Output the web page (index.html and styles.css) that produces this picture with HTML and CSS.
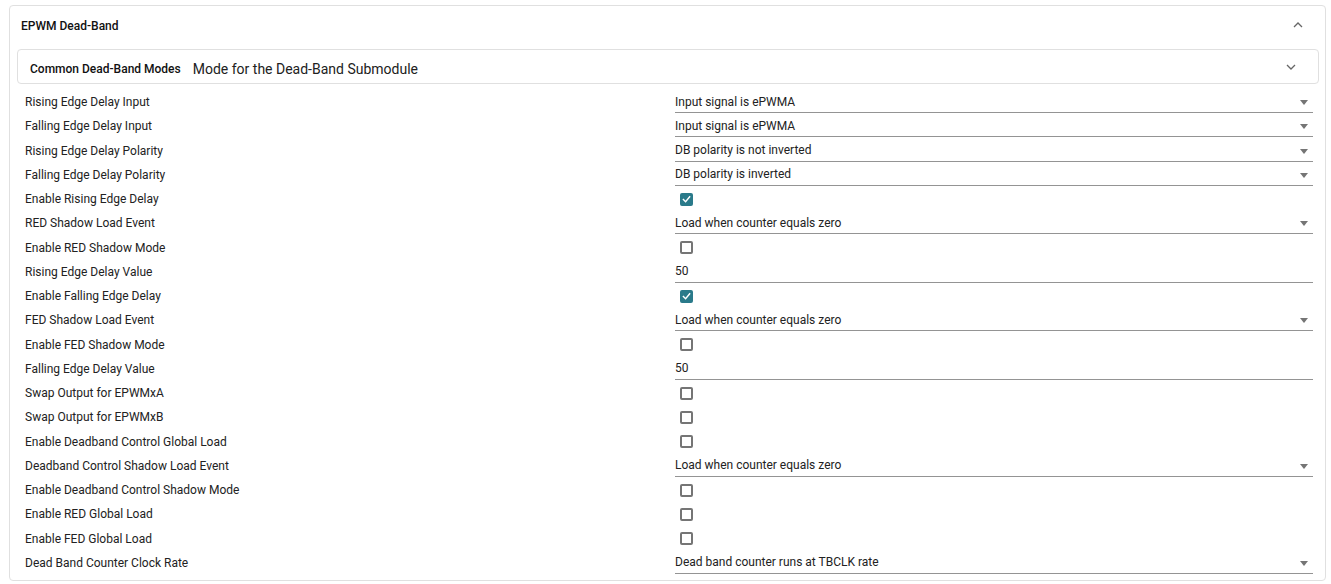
FILE: index.html
```html
<!DOCTYPE html>
<html lang="en">
<head>
    <meta charset="UTF-8">
    <meta name="viewport" content="width=device-width, initial-scale=1.0">
    <title>EPWM Dead-Band</title>
    <link rel="stylesheet" href="styles.css">
</head>
<body>

    <div class="panel">
        <div class="panel-head">
            <span class="panel-title">EPWM Dead-Band</span>
            <svg class="chev" width="10" height="6" viewBox="0 0 10 6"><path d="M1 5 L5 1 L9 5" fill="none" stroke="#666" stroke-width="1.3"/></svg>
        </div>

        <div class="mode-card">
            <span class="mode-name">Common Dead-Band Modes</span>
            <span class="mode-desc">Mode for the Dead-Band Submodule</span>
            <svg class="chev" width="10" height="6" viewBox="0 0 10 6"><path d="M1 1 L5 5 L9 1" fill="none" stroke="#666" stroke-width="1.3"/></svg>
        </div>

        <div class="rows">
            <div class="label">Rising Edge Delay Input</div>
            <div class="select">Input signal is ePWMA</div>

            <div class="label">Falling Edge Delay Input</div>
            <div class="select">Input signal is ePWMA</div>

            <div class="label">Rising Edge Delay Polarity</div>
            <div class="select">DB polarity is not inverted</div>

            <div class="label">Falling Edge Delay Polarity</div>
            <div class="select">DB polarity is inverted</div>

            <div class="label">Enable Rising Edge Delay</div>
            <div class="check"><span class="box on"><svg width="10" height="8" viewBox="0 0 10 8"><path d="M1 4 L4 7 L9 1" fill="none" stroke="#fff" stroke-width="1.6"/></svg></span></div>

            <div class="label">RED Shadow Load Event</div>
            <div class="select">Load when counter equals zero</div>

            <div class="label">Enable RED Shadow Mode</div>
            <div class="check"><span class="box"></span></div>

            <div class="label">Rising Edge Delay Value</div>
            <div class="text">50</div>

            <div class="label">Enable Falling Edge Delay</div>
            <div class="check"><span class="box on"><svg width="10" height="8" viewBox="0 0 10 8"><path d="M1 4 L4 7 L9 1" fill="none" stroke="#fff" stroke-width="1.6"/></svg></span></div>

            <div class="label">FED Shadow Load Event</div>
            <div class="select">Load when counter equals zero</div>

            <div class="label">Enable FED Shadow Mode</div>
            <div class="check"><span class="box"></span></div>

            <div class="label">Falling Edge Delay Value</div>
            <div class="text">50</div>

            <div class="label">Swap Output for EPWMxA</div>
            <div class="check"><span class="box"></span></div>

            <div class="label">Swap Output for EPWMxB</div>
            <div class="check"><span class="box"></span></div>

            <div class="label">Enable Deadband Control Global Load</div>
            <div class="check"><span class="box"></span></div>

            <div class="label">Deadband Control Shadow Load Event</div>
            <div class="select">Load when counter equals zero</div>

            <div class="label">Enable Deadband Control Shadow Mode</div>
            <div class="check"><span class="box"></span></div>

            <div class="label">Enable RED Global Load</div>
            <div class="check"><span class="box"></span></div>

            <div class="label">Enable FED Global Load</div>
            <div class="check"><span class="box"></span></div>

            <div class="label">Dead Band Counter Clock Rate</div>
            <div class="select">Dead band counter runs at TBCLK rate</div>
        </div>
    </div>

</body>
</html>
```

FILE: styles.css
```css
body {
    margin: 0;
    padding: 5px 5px 0 9px;
    font-family: Roboto, "Liberation Sans", sans-serif;
    background-color: #ffffff;
    color: #212121;
}

.panel {
    border: 1px solid #e0e0e0;
    border-radius: 4px;
    height: 576px;
    box-sizing: border-box;
}

.panel-head {
    height: 39px;
    margin-bottom: 4px;
    display: flex;
    align-items: center;
    justify-content: space-between;
    padding: 1px 22px 0 11px;
    box-sizing: border-box;
}

.panel-title {
    font-size: 12px;
    font-weight: 500;
    color: #111;
}

.panel-head .chev {
    margin-top: -3px;
}

.mode-card {
    margin: 0 6px 0 7px;
    height: 35px;
    box-sizing: border-box;
    border: 1px solid #e0e0e0;
    border-radius: 4px;
    display: flex;
    align-items: center;
    padding: 5px 22px 0 12px;
}

.mode-name {
    font-size: 12px;
    font-weight: 500;
    color: #111;
}

.mode-desc {
    font-size: 14px;
    margin-left: 12px;
    color: #212121;
    flex: 1;
}

.mode-card .chev {
    margin-top: -4px;
}

.rows {
    display: grid;
    grid-template-columns: 650px 1fr;
    grid-auto-rows: 24.25px;
    padding: 6px 12px 0 15px;
    font-size: 12px;
}

.label {
    display: flex;
    align-items: center;
    color: #222;
}

.select,
.text {
    display: flex;
    align-items: center;
    border-bottom: 1px solid #949494;
    height: 21px;
    margin-top: 1px;
    color: #222;
}

.select {
    justify-content: space-between;
}

/* little dropdown triangle */
.select::after {
    content: '';
    border-left: 4px solid transparent;
    border-right: 4px solid transparent;
    border-top: 5px solid #757575;
    margin-right: 5px;
    margin-top: 2px;
}

.check {
    display: flex;
    align-items: center;
    padding-left: 5px;
}

.box {
    width: 13px;
    height: 13px;
    box-sizing: border-box;
    border: 2px solid #757575;
    border-radius: 2px;
    display: flex;
    align-items: center;
    justify-content: center;
}

.box.on {
    background-color: #2a7a8a;
    border-color: #2a7a8a;
}
```
